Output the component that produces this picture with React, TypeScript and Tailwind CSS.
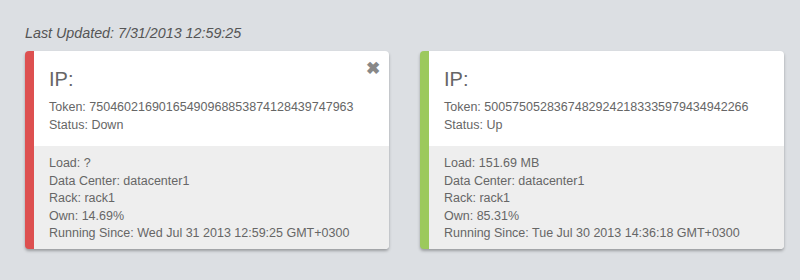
const nodes = [
  {
    token: "75046021690165490968853874128439747963",
    status: "Down",
    load: "?",
    dc: "datacenter1",
    rack: "rack1",
    own: "14.69%",
    since: "Wed Jul 31 2013 12:59:25 GMT+0300",
    up: false,
  },
  {
    token: "50057505283674829242183335979434942266",
    status: "Up",
    load: "151.69 MB",
    dc: "datacenter1",
    rack: "rack1",
    own: "85.31%",
    since: "Tue Jul 30 2013 14:36:18 GMT+0300",
    up: true,
  },
]

function NodeCard({ node }: { node: (typeof nodes)[number] }) {
  return (
    <div
      className={`relative w-[364px] shrink-0 rounded-[4px] border-l-[9px] bg-white shadow-[0_2px_3px_rgba(0,0,0,0.3)] overflow-hidden ${
        node.up ? "border-[#9cc95c]" : "border-[#dd5050]"
      }`}
    >
      {!node.up && (
        <span className="absolute right-[9px] top-[9px] text-[17px] leading-none text-[#888] font-bold">
          ✖
        </span>
      )}
      <div className="pl-[15px] pt-[16px] pb-[12px]">
        <h2 className="text-[20px] leading-[24px] text-[#666]">IP:</h2>
        <div className="mt-[7px] text-[12.5px] leading-[18px] text-[#666]">
          <p>Token: {node.token}</p>
          <p>Status: {node.status}</p>
        </div>
      </div>
      <div className="bg-[#eeeeee] pl-[15px] pt-[9px] pb-[6px] text-[12.5px] leading-[17.5px] text-[#666]">
        <p>Load: {node.load}</p>
        <p>Data Center: {node.dc}</p>
        <p>Rack: {node.rack}</p>
        <p>Own: {node.own}</p>
        <p>Running Since: {node.since}</p>
      </div>
    </div>
  )
}

export default function App() {
  return (
    <div className="min-h-[280px] w-[800px] bg-[#dcdfe3] font-['Liberation_Sans',Arial,sans-serif] px-[25px] pt-[24px]">
      <p className="text-[14.3px] italic leading-[18px] text-[#555]">Last Updated: 7/31/2013 12:59:25</p>
      <div className="mt-[9px] flex gap-[31px]">
        {nodes.map((n) => (
          <NodeCard key={n.token} node={n} />
        ))}
      </div>
    </div>
  )
}
